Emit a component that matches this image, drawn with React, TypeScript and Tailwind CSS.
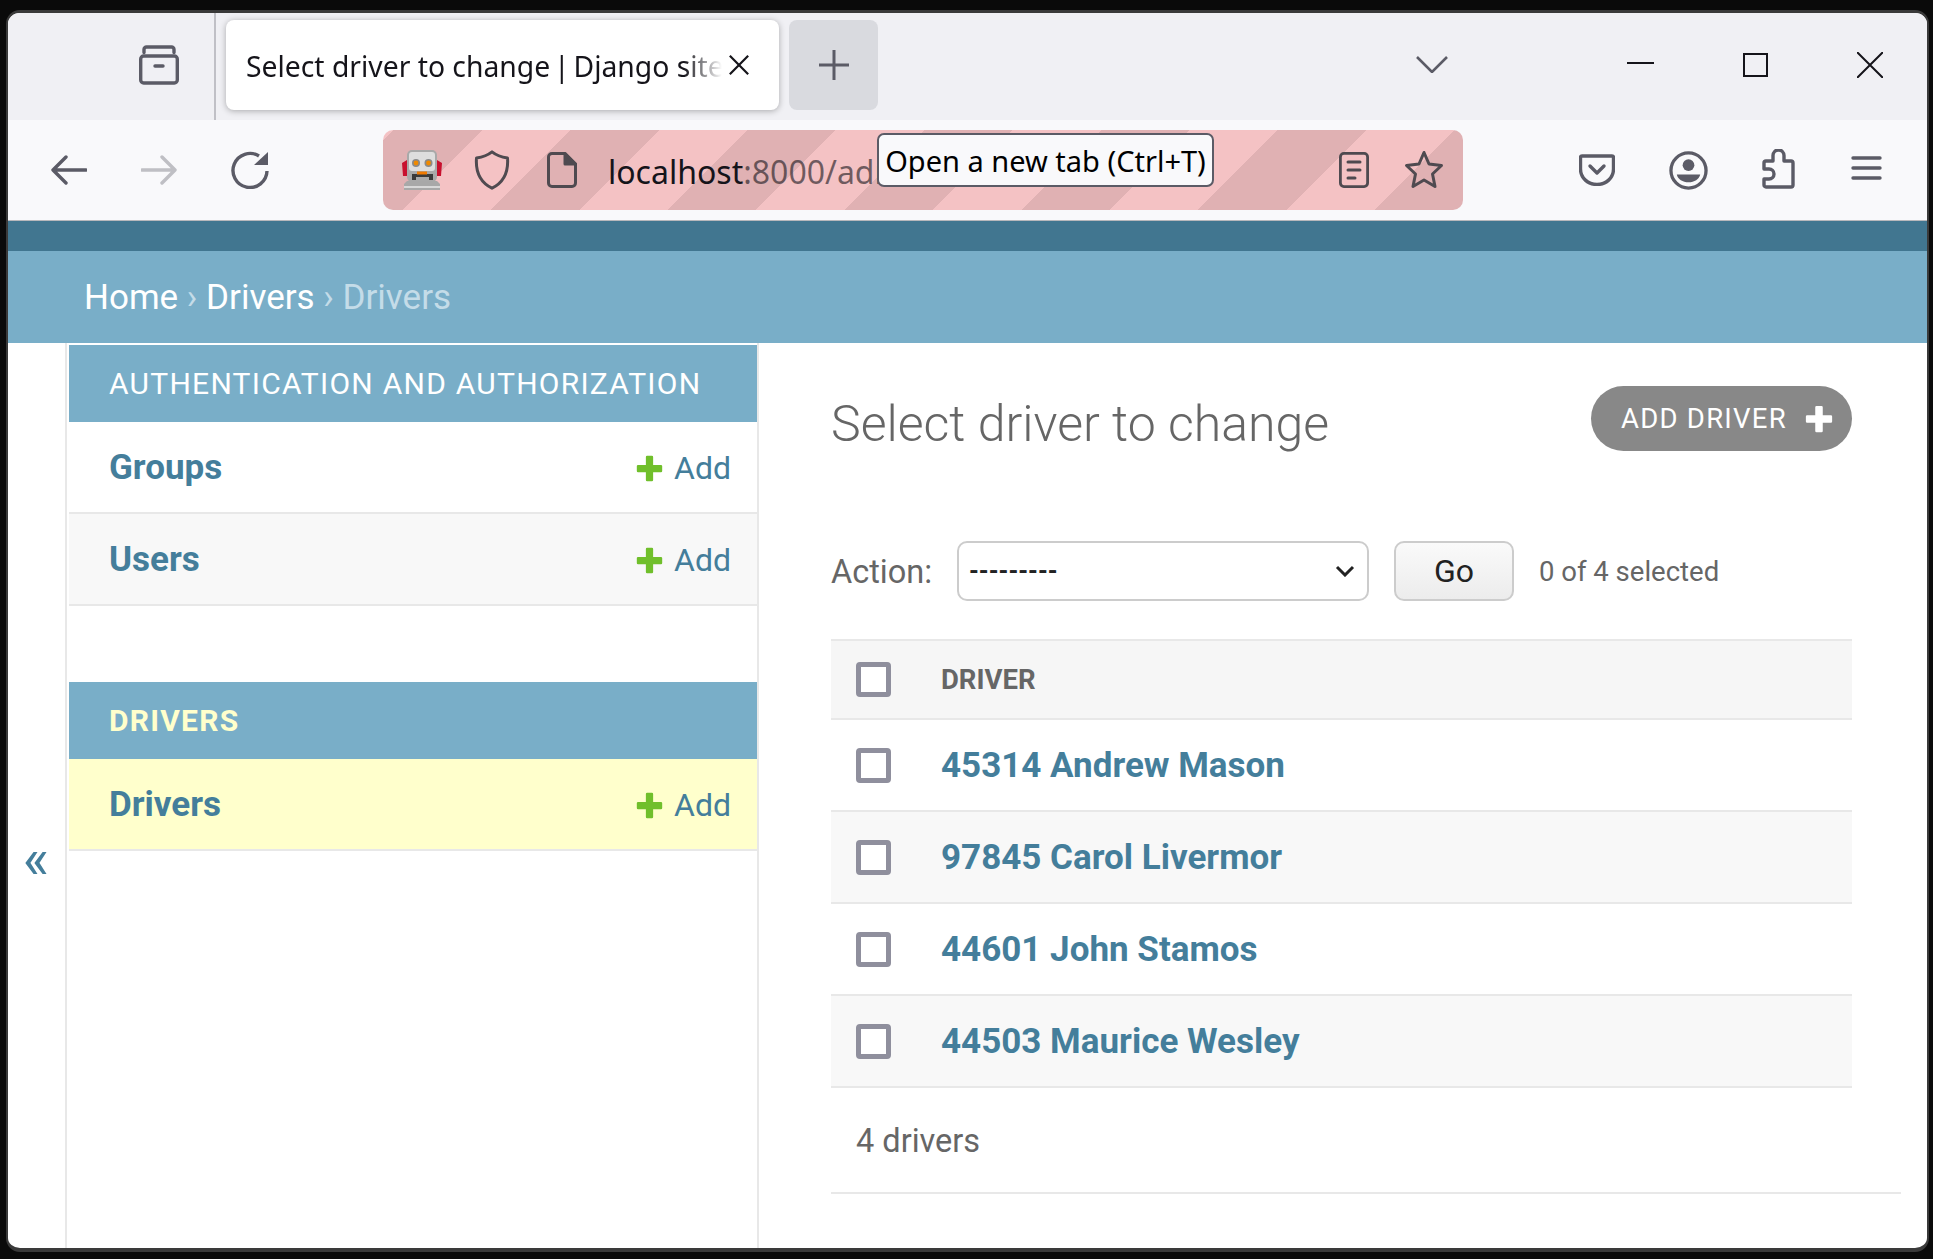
import React from 'react';

const sidebarRows = [
  { caption: 'AUTHENTICATION AND AUTHORIZATION', rows: ['Groups', 'Users'] },
  { caption: 'DRIVERS', rows: ['Drivers'], current: true },
];

const drivers = ['45314 Andrew Mason', '97845 Carol Livermor', '44601 John Stamos', '44503 Maurice Wesley'];

const Icon = ({ className, box = '0 0 40 40', children }: { className: string; box?: string; children: React.ReactNode }) => (
  <svg
    viewBox={box}
    className={className}
    fill="none"
    stroke="#5b5b66"
    strokeWidth="3.4"
    strokeLinecap="round"
    strokeLinejoin="round"
  >
    {children}
  </svg>
);

const Plus = ({ color, className }: { color: string; className: string }) => (
  <svg viewBox="0 0 24 24" className={className}>
    <path d="M9 2.5a1 1 0 0 1 1-1h4a1 1 0 0 1 1 1V9h6.5a1 1 0 0 1 1 1v4a1 1 0 0 1-1 1H15v6.500a1 1 0 0 1-1 1h-4a1 1 0 0 1-1-1V15H2.500a1 1 0 0 1-1-1v-4a1 1 0 0 1 1-1H9z" fill={color} />
  </svg>
);

const Checkbox = () => <span className="block w-[35px] h-[35px] border-[5px] border-[#8f8f9d] rounded-[4px] bg-white" />;

function TabBar() {
  return (
    <div className="h-[107px] bg-[#f0f0f4] flex relative">
      <div className="w-[208px] shrink-0 border-r-2 border-[#c0c0c6] flex items-center pl-[131px] pb-[4px]">
        <Icon className="w-[40px] h-[40px]">
          <path d="M5 8.500V5.500A2.500 2.500 0 0 1 7.500 3h25A2.500 2.500 0 0 1 35 5.500V8.500" transform="translate(0 -1)" />
          <rect x="1.700" y="11" width="36.600" height="27" rx="3" />
          <path d="M16 21h8" />
        </Icon>
      </div>
      <div className="w-[553px] h-[90px] mt-[7px] ml-[10px] bg-white rounded-[8px] shadow-[0_1px_6px_rgba(0,0,0,0.3)] flex items-center pl-[20px] relative">
        <span className="font-['Noto_Sans'] text-[28.3px] leading-[40px] mt-[2px] text-[#15141a] whitespace-nowrap w-[476px] overflow-hidden [mask-image:linear-gradient(to_right,black_92%,transparent)]">
          Select driver to change <span className="-mx-[3.5px]">|</span> Django site admin
        </span>
        <svg viewBox="0 0 24 24" className="absolute left-[502px] top-[34px] w-[22px] h-[22px]" fill="none" stroke="#15141a" strokeWidth="2.400">
          <path d="M2 2l20 20M22 2L2 22" />
        </svg>
      </div>
      <div className="w-[89px] h-[90px] mt-[7px] ml-[10px] bg-[#d9dadf] rounded-[8px] flex items-center justify-center">
        <svg viewBox="0 0 30 30" className="w-[30px] h-[30px]" fill="none" stroke="#5b5b66" strokeWidth="3">
          <path d="M15 0v30M0 15h30" />
        </svg>
      </div>
      <div className="flex-1" />
      <svg viewBox="0 0 32 17" className="absolute left-[1408px] top-[43px] w-[32px] h-[17px]" fill="none" stroke="#5b5b66" strokeWidth="2.600">
        <path d="M1 1l15 15L31 1" />
      </svg>
      <div className="absolute left-[1619px] top-[49px] w-[27px] h-[2px] bg-[#15141a]" />
      <div className="absolute left-[1735px] top-[40px] w-[25px] h-[24px] border-2 border-[#15141a]" />
      <svg viewBox="0 0 26 26" className="absolute left-[1849px] top-[39px] w-[26px] h-[26px]" fill="none" stroke="#15141a" strokeWidth="2">
        <path d="M0 0l26 26M26 0L0 26" />
      </svg>
    </div>
  );
}

function Toolbar() {
  return (
    <div className="h-[101px] bg-[#f9f9fb] border-b border-[#b8b8bc] flex items-center relative">
      <Icon className="absolute left-[43px] top-[35px] w-[36px] h-[30px]" box="0 0 36 30">
        <path d="M35 15H3M15 2L2 15l13 13" />
      </Icon>
      <svg viewBox="0 0 36 30" className="absolute left-[133px] top-[35px] w-[36px] h-[30px]" fill="none" stroke="#bfbfc4" strokeWidth="3.400" strokeLinejoin="round" strokeLinecap="round">
        <path d="M1 15h32M21 2l13 13-13 13" />
      </svg>
      <svg viewBox="0 0 38 38" className="absolute left-[223px] top-[31px] w-[38px] h-[38px]" fill="none" stroke="#5b5b66" strokeWidth="3.400">
        <path d="M36 20A17 17 0 1 1 28 5" />
        <path d="M37 1v13H23z" fill="#5b5b66" stroke="none" />
      </svg>
      <div className="absolute left-[375px] top-[10px] w-[1080px] h-[80px] rounded-[10px] overflow-hidden bg-[repeating-linear-gradient(-45deg,#e0b1b3_0,#e0b1b3_62.5px,#f4c2c4_62.5px,#f4c2c4_125px)] flex items-center">
        <svg viewBox="0 0 40 40" className="absolute left-[19px] top-[20px] w-[40px] h-[40px]">
          <path d="M0 13l5-3v16H1zM40 13l-5-3v16h4z" fill="#c8102e" />
          <rect x="5" y="0" width="30" height="32" rx="5" fill="#a9a9a9" />
          <rect x="7" y="2" width="26" height="19" rx="3" fill="#dedede" />
          <circle cx="14" cy="13" r="4" fill="#8a8a8a" />
          <circle cx="26.500" cy="13" r="4" fill="#8a8a8a" />
          <circle cx="14" cy="13" r="2.400" fill="#f08a00" />
          <circle cx="26.500" cy="13" r="2.400" fill="#f08a00" />
          <path d="M10 30v-6h6l2-2h5l2 2h6v6h-4v-3H14v3z" fill="#3a3a3a" />
          <rect x="15" y="21.500" width="10" height="3" fill="#f07a00" />
          <path d="M2 34l3-3h30l3 3v6H2z" fill="#a8a8a8" />
          <rect x="2" y="36" width="36" height="2" fill="#d8d8d8" />
        </svg>
        <svg viewBox="0 0 36 40" className="absolute left-[91px] top-[20px] w-[36px] h-[40px]" fill="none" stroke="#4f4a50" strokeWidth="3">
          <path d="M18 1.800c3 2.400 8 5 15.500 6.200 1 13-3 24-15.500 30.200C5.500 32 1.500 21 2.500 8 10 6.800 15 4.200 18 1.800z" strokeLinejoin="round" />
        </svg>
        <svg viewBox="0 0 30 36" className="absolute left-[164px] top-[22px] w-[30px] h-[36px]" fill="none" stroke="#4f4a50" strokeWidth="3">
          <path d="M18 1.500H5A3.500 3.500 0 0 0 1.500 5v26A3.500 3.500 0 0 0 5 34.500h20a3.500 3.500 0 0 0 3.500-3.500V12z" strokeLinejoin="round" />
          <path d="M18 1.500L28.500 12H18z" fill="#4f4a50" strokeLinejoin="round" />
        </svg>
        <span className="absolute left-[225px] top-[17px] font-['Noto_Sans'] text-[32px] leading-[50px] whitespace-nowrap text-[#15141a]">
          localhost<span className="text-[#15141a]/60">:8000/admin/drivers/driver/</span>
        </span>
        <svg viewBox="0 0 30 36" className="absolute left-[956px] top-[22px] w-[30px] h-[36px]" fill="none" stroke="#4f4a50" strokeWidth="2.800">
          <rect x="1.400" y="1.400" width="27.200" height="33.200" rx="3.500" />
          <path d="M9 10h12M9 18h12M9 26h7" strokeWidth="3" strokeLinecap="round" />
        </svg>
        <svg viewBox="0 0 40 40" className="absolute left-[1021px] top-[20px] w-[40px] h-[40px]" fill="none" stroke="#4f4a50" strokeWidth="3" strokeLinejoin="round">
          <path d="M20 2.500l5 11.500 12.500 1.500-9 8.500 2.500 12.500L20 30l-11 6.500L11.500 24l-9-8.500L15 14z" />
        </svg>
      </div>
      <Icon className="absolute left-[1571px] top-[34px] w-[36px] h-[32px]" box="0 0 36 32">
        <path d="M3 2h30a1.500 1.500 0 0 1 1.500 1.500V15C34.500 24 27 30.500 18 30.500S1.500 24 1.500 15V3.500A1.500 1.500 0 0 1 3 2z" />
        <path d="M11 12l7 7 7-7" />
      </Icon>
      <svg viewBox="0 0 40 40" className="absolute left-[1661px] top-[31px] w-[39px] h-[39px]">
        <circle cx="20" cy="20" r="18" fill="none" stroke="#5b5b66" strokeWidth="3.400" />
        <circle cx="20" cy="14.500" r="6" fill="#5b5b66" />
        <path d="M8 24h24c-1 5-6 8-12 8s-11-3-12-8z" fill="#5b5b66" />
      </svg>
      <Icon className="absolute left-[1754px] top-[29px] w-[33px] h-[40px]" box="0 0 33 40">
        <path d="M11 12V6.500a5.500 5.500 0 0 1 11 0V12h7a2 2 0 0 1 2 2v22a2 2 0 0 1-2 2H4a2 2 0 0 1-2-2v-6h5a5 5 0 0 0 0-10H2v-6a2 2 0 0 1 2-2z" />
      </Icon>
      <svg viewBox="0 0 31 24" className="absolute left-[1843px] top-[36px] w-[31px] h-[24px]" stroke="#5b5b66" strokeWidth="3.400" strokeLinecap="round">
        <path d="M2 2h27M2 12h27M2 22h27" />
      </svg>
      {/* Hover tooltip of the new tab button */}
      <div className="absolute left-[869px] top-[13px] w-[337px] h-[54px] pt-[2px] rounded-[7px] border-2 border-[#5b5b66] bg-[#f9f9fb] flex items-center justify-center font-['Noto_Sans'] text-[29px] text-black whitespace-nowrap">
        Open a new tab (Ctrl+T)
      </div>
    </div>
  );
}

function Sidebar() {
  return (
    <aside className="w-[692px] shrink-0 border-r-2 border-[#e8e8e8] pt-[2px] pl-[2px] font-['Roboto']">
      {sidebarRows.map((app) => (
        <div key={app.caption} className="mb-[76px]">
          <div className={`h-[77px] bg-[#79aec8] pl-[40px] flex items-center text-[30px] tracking-[1.250px] ${app.current ? 'text-[#ffffcc] font-bold' : 'text-white'}`}>
            {app.caption}
          </div>
          {app.rows.map((row, i) => (
            <div
              key={row}
              className={`h-[92px] pl-[40px] pr-[26px] pt-[2px] border-b-2 border-[#e8e8e8] flex items-center justify-between text-[#447e9b] text-[35px] ${app.current ? 'bg-[#ffffcc]' : i % 2 ? 'bg-[#f8f8f8]' : 'bg-white'}`}
            >
              <span className="font-bold">{row}</span>
              <span className="flex items-center gap-[10px] text-[32px]">
                <Plus color="#70bf2b" className="w-[29px] h-[29px]" />
                Add
              </span>
            </div>
          ))}
        </div>
      ))}
    </aside>
  );
}

function Content() {
  return (
    <main className="flex-1 pl-[72px] pr-[75px] font-['Roboto'] text-[#666666]">
      <div className="flex items-start justify-between pt-[43px] h-[198px]">
        <h1 className="font-light text-[50px] leading-[74px] mt-[1px]">Select driver to change</h1>
        <div className="h-[65px] w-[261px] rounded-full bg-[#888888] flex items-center pl-[30px] gap-[17px] text-white text-[27.5px] tracking-[1.250px]">
          ADD DRIVER
          <Plus color="#ffffff" className="w-[30px] h-[30px]" />
        </div>
      </div>
      <div className="flex items-center h-[60px] text-[32.5px]">
        <span className="w-[126px] shrink-0 pt-[2px]">Action:</span>
        <div className="w-[412px] h-[60px] rounded-[10px] border-2 border-[#cccccc] bg-white flex items-center justify-between pl-[10px] pr-[12px] text-[#222222] text-[25px] font-bold relative">
          <span className="pt-[2px]">---------</span>
          <svg viewBox="0 0 20 12" className="w-[20px] h-[12px]" fill="none" stroke="#222222" strokeWidth="3">
            <path d="M2 2l8 8 8-8" />
          </svg>
        </div>
        <div className="w-[120px] h-[60px] ml-[25px] rounded-[10px] border-2 border-[#cccccc] bg-gradient-to-b from-[#fafafa] to-[#ececec] flex items-center justify-center text-[#222222] text-[32px]">
          Go
        </div>
        <span className="ml-[25px] pt-[2px] text-[27.5px]">0 of 4 selected</span>
      </div>
      <div className="mt-[38px] border-y-2 border-[#e8e8e8] h-[81px] bg-[#f6f6f6] flex items-center pl-[25px] gap-[50px]">
        <Checkbox />
        <span className="font-bold text-[27.5px] text-[#666666]">DRIVER</span>
      </div>
      {drivers.map((d, i) => (
        <div key={d} className={`h-[92px] border-b-2 border-[#e8e8e8] flex items-center pl-[25px] gap-[50px] ${i % 2 ? 'bg-[#f8f8f8]' : 'bg-white'}`}>
          <Checkbox />
          <span className="font-bold text-[35px] text-[#447e9b] pt-[2px]">{d}</span>
        </div>
      ))}
      <div className="h-[106px] -mr-[49px] border-b-2 border-[#e8e8e8] flex items-center pl-[25px] pt-[2px] text-[32.5px]">4 drivers</div>
    </main>
  );
}

export default function App() {
  return (
    <div className="w-[1933px] h-[1259px] bg-[#0a0a0a] pt-[10px] pl-[6px] pr-[4px] pb-[7px] overflow-hidden">
      <div className="h-full rounded-[14px] border-x-2 border-t-[3px] border-b-[4px] border-[#3a3a3a] bg-white overflow-hidden flex flex-col">
        <TabBar />
        <Toolbar />
        <div className="h-[30px] bg-[#417690] shrink-0" />
        <div className="h-[92px] pt-[2px] bg-[#79aec8] shrink-0 flex items-center pl-[76px] font-['Roboto'] text-[35px] text-white whitespace-pre">
          Home<span className="text-[#c4dce8]"> › </span>Drivers<span className="text-[#c4dce8]"> › Drivers</span>
        </div>
        <div className="flex-1 flex min-h-0">
          <div className="w-[59px] shrink-0 border-r-2 border-[#e8e8e8] flex justify-center pt-[489px]">
            <span className="font-['Roboto'] text-[#447e9b] text-[56px] leading-[54px] pr-[1px]">«</span>
          </div>
          <Sidebar />
          <Content />
        </div>
      </div>
    </div>
  );
}
